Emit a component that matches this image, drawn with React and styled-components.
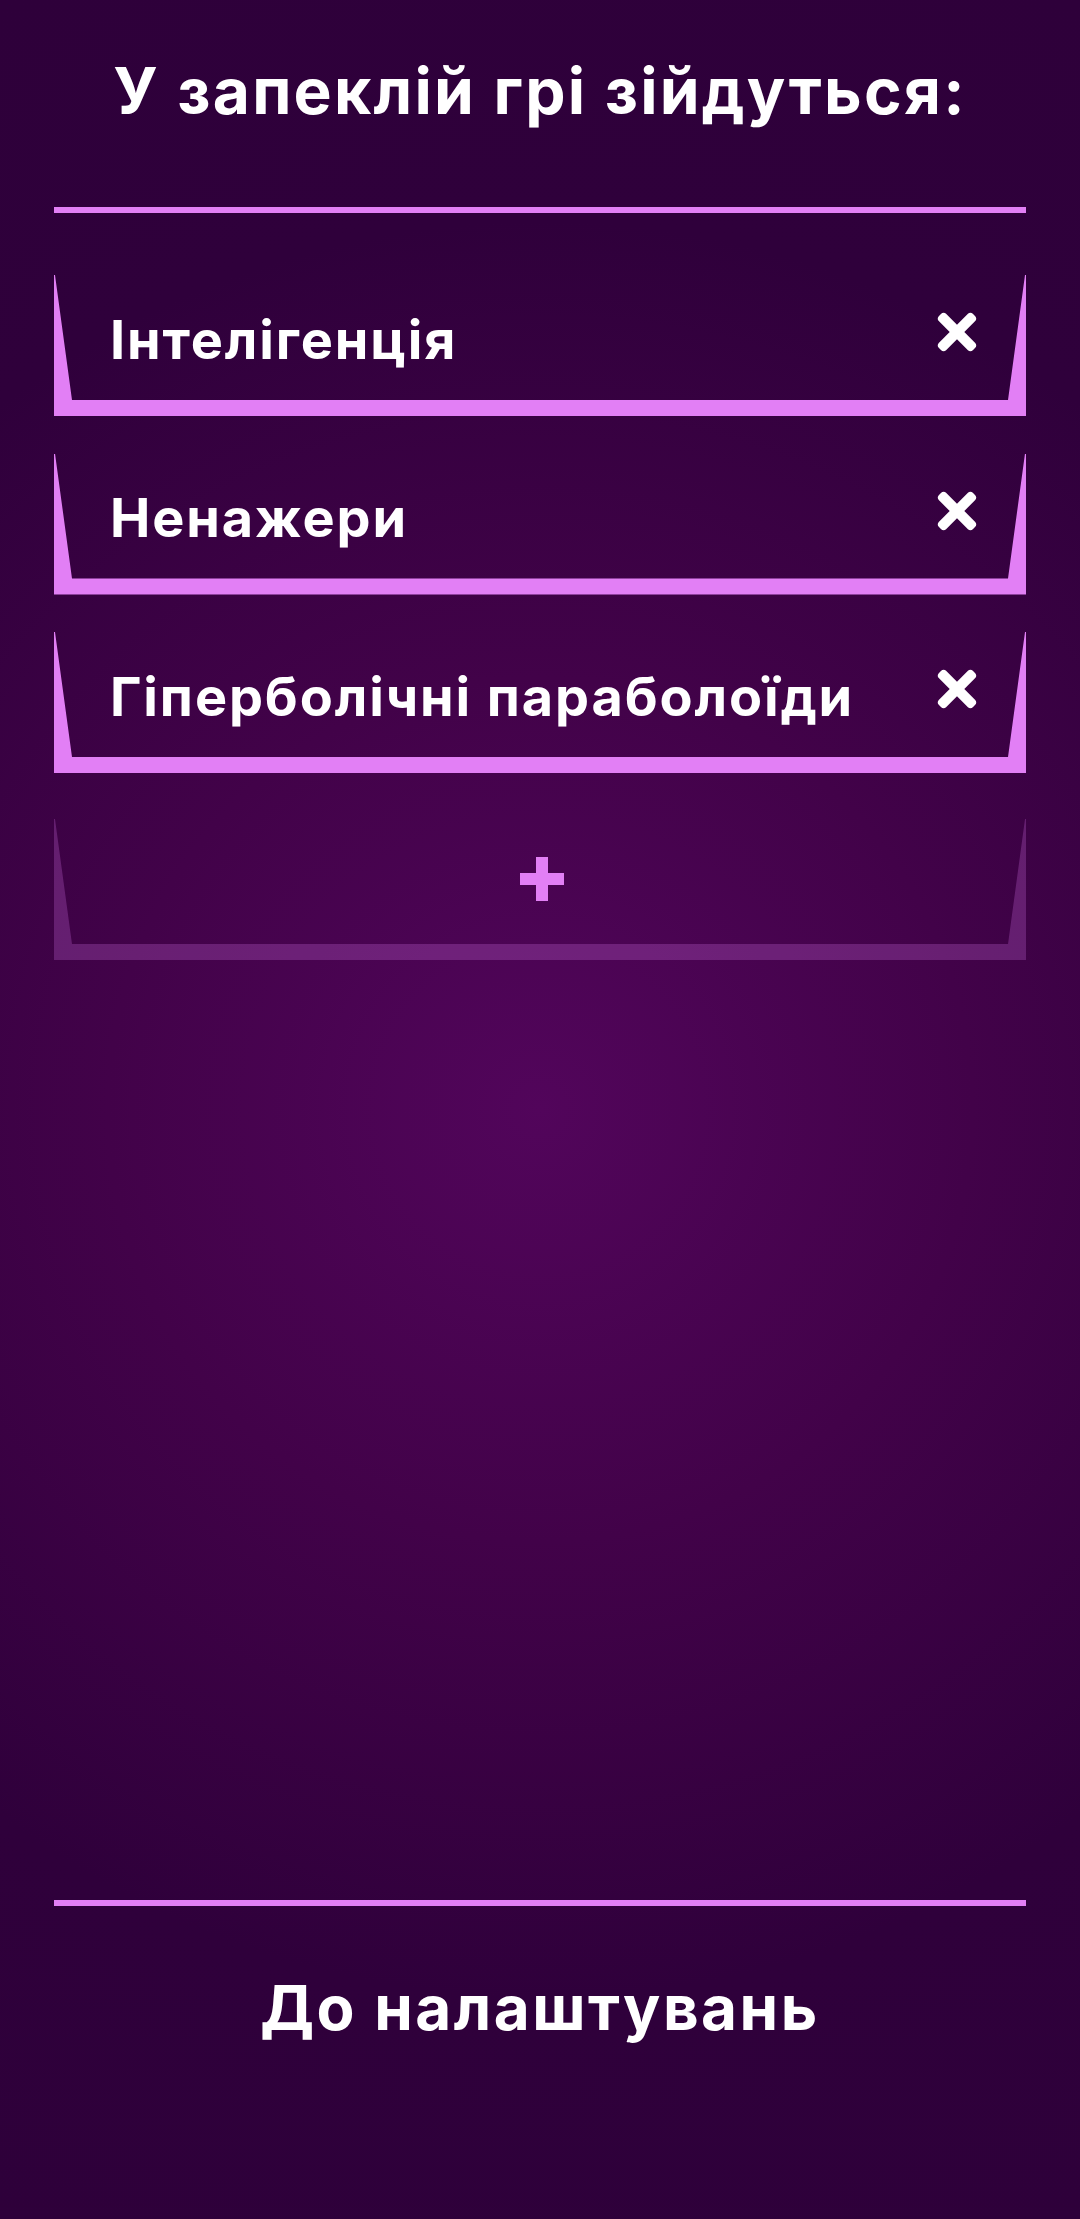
import React, { useState } from "react";
import styled, { createGlobalStyle } from "styled-components";
import { FaTimes } from "react-icons/fa";

const GlobalStyle = createGlobalStyle`
  * {
    box-sizing: border-box;
  }
  body {
    margin: 0;
    background: #2e003b;
    font-family: "Inter", "Open Sans", sans-serif;
  }
`;

const Screen = styled.div`
  min-height: 100vh;
  display: flex;
  flex-direction: column;
  padding: 59px 54px 180px;
  background: radial-gradient(
    circle at 50% 50%,
    #52055b 0%,
    #420249 35%,
    #2f003b 72%,
    #2e003a 100%
  );
  color: #fff;
`;

const Title = styled.h1`
  margin: 0;
  font-size: 64px;
  line-height: 1;
  font-weight: 700;
  letter-spacing: 0.035em;
  text-align: center;
`;

const Divider = styled.div`
  height: 6px;
  background: #e27ff5;
  margin-top: ${(p) => p.$top || 0}px;
`;

const TeamList = styled.div`
  display: flex;
  flex-direction: column;
  gap: 37.5px;
  margin-top: 62px;
`;

const Card = styled.div`
  position: relative;
  height: 141px;
  display: flex;
  align-items: center;
  justify-content: ${(p) => (p.$add ? "center" : "space-between")};
  padding: 4px 41px 16px 56px;
  margin-top: ${(p) => (p.$add ? "8.5px" : "0")};

  &::before {
    content: "";
    position: absolute;
    inset: 0;
    background: ${(p) => (p.$add ? "rgba(226, 127, 245, 0.24)" : "#e27ff5")};
    clip-path: polygon(
      0 0,
      1px 0,
      18px calc(100% - 16px),
      calc(100% - 18px) calc(100% - 16px),
      calc(100% - 1px) 0,
      100% 0,
      100% 100%,
      0 100%
    );
    pointer-events: none;
  }
`;

const TeamName = styled.span`
  font-size: 54px;
  line-height: 1;
  font-weight: 700;
  letter-spacing: 0.035em;
  white-space: nowrap;
`;

const RemoveButton = styled.button`
  border: none;
  background: none;
  padding: 0;
  margin-bottom: 15px;
  color: #fff;
  display: flex;
  cursor: pointer;
`;

const AddButton = styled.button`
  border: none;
  background: none;
  padding: 0;
  margin-left: -11px;
  margin-bottom: 10px;
  display: flex;
  cursor: pointer;
`;

const Spacer = styled.div`
  flex: 1;
`;

const SettingsLink = styled.button`
  margin-top: 71.5px;
  border: none;
  background: none;
  padding: 0;
  color: #fff;
  font-family: inherit;
  font-size: 62px;
  line-height: 1;
  font-weight: 700;
  letter-spacing: 0.04em;
  text-align: center;
  cursor: pointer;
`;

const PlusIcon = () => (
  <svg width="44" height="44" viewBox="0 0 44 44">
    <rect x="16" y="0" width="12" height="44" fill="#e27ff5" />
    <rect x="0" y="16" width="44" height="12" fill="#e27ff5" />
  </svg>
);

export default function App() {
  const [teams, setTeams] = useState([
    "Інтелігенція",
    "Ненажери",
    "Гіперболічні параболоїди",
  ]);

  const removeTeam = (i) => setTeams(teams.filter((_, idx) => idx !== i));

  return (
    <>
      <GlobalStyle />
      <Screen>
        <Title>У запеклій грі зійдуться:</Title>
        <Divider $top={84} />
        <TeamList>
          {teams.map((name, i) => (
            <Card key={name}>
              <TeamName>{name}</TeamName>
              <RemoveButton onClick={() => removeTeam(i)}>
                <FaTimes size={56} />
              </RemoveButton>
            </Card>
          ))}
          <Card $add>
            <AddButton>
              <PlusIcon />
            </AddButton>
          </Card>
        </TeamList>
        <Spacer />
        <Divider />
        <SettingsLink>До налаштувань</SettingsLink>
      </Screen>
    </>
  );
}
